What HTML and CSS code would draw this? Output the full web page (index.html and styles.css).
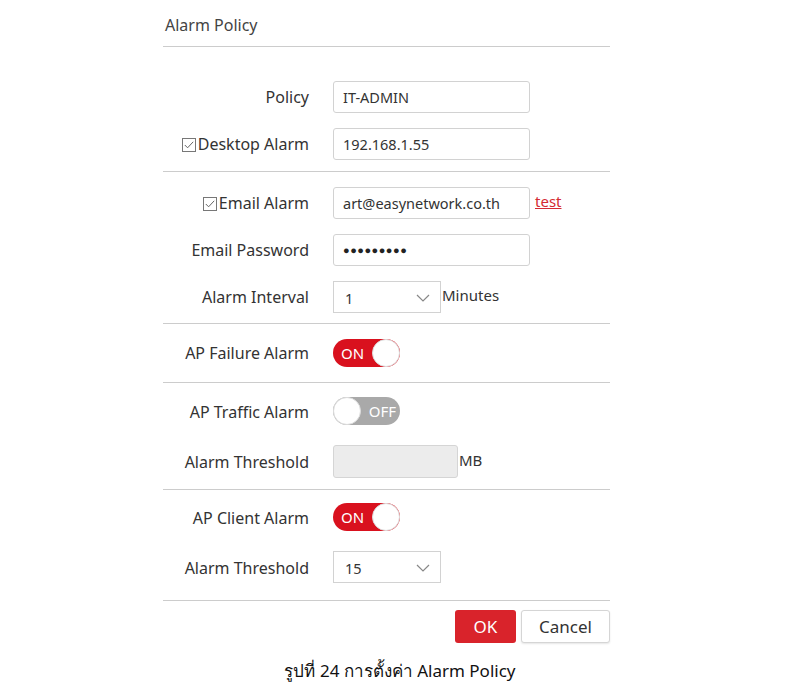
FILE: index.html
```html
<!DOCTYPE html>
<html lang="en">
<head>
    <meta charset="UTF-8">
    <title>Alarm Policy</title>
    <link rel="stylesheet" href="styles.css">
</head>
<body>
    <div class="panel">
        <div class="title">Alarm Policy</div>

        <div class="group g1">
            <div class="row">
                <label class="lbl">Policy</label>
                <div class="field"><input class="txt" type="text" value="IT-ADMIN"></div>
            </div>
            <div class="row">
                <label class="lbl"><span class="chk"><svg width="14" height="14" viewBox="0 0 14 14"><rect x="0.5" y="0.5" width="13" height="13" fill="#fff" stroke="#777"/><path d="M2.8 7 L5.6 9.8 L11.2 3.8" fill="none" stroke="#666" stroke-width="1"/></svg></span>Desktop Alarm</label>
                <div class="field"><input class="txt" type="text" value="192.168.1.55"></div>
            </div>
        </div>

        <div class="group g2">
            <div class="row">
                <label class="lbl"><span class="chk"><svg width="14" height="14" viewBox="0 0 14 14"><rect x="0.5" y="0.5" width="13" height="13" fill="#fff" stroke="#777"/><path d="M2.8 7 L5.6 9.8 L11.2 3.8" fill="none" stroke="#666" stroke-width="1"/></svg></span>Email Alarm</label>
                <div class="field"><input class="txt" type="text" value="art@easynetwork.co.th"><a class="test" href="#">test</a></div>
            </div>
            <div class="row">
                <label class="lbl">Email Password</label>
                <div class="field"><div class="txt dots">●●●●●●●●●</div></div>
            </div>
            <div class="row">
                <label class="lbl">Alarm Interval</label>
                <div class="field">
                    <div class="sel"><span>1</span><svg width="14" height="8" viewBox="0 0 14 8"><path d="M1 1 L7 7 L13 1" fill="none" stroke="#888" stroke-width="1.2"/></svg></div>
                    <span class="unit">Minutes</span>
                </div>
            </div>
        </div>

        <div class="group g3">
            <div class="row">
                <label class="lbl">AP Failure Alarm</label>
                <div class="field"><div class="toggle on"><span class="tt">ON</span><span class="knob"></span></div></div>
            </div>
        </div>

        <div class="group g4">
            <div class="row">
                <label class="lbl">AP Traffic Alarm</label>
                <div class="field"><div class="toggle off"><span class="knob"></span><span class="tt">OFF</span></div></div>
            </div>
            <div class="row">
                <label class="lbl">Alarm Threshold</label>
                <div class="field"><div class="txt short disabled"></div><span class="unit">MB</span></div>
            </div>
        </div>

        <div class="group g5">
            <div class="row">
                <label class="lbl">AP Client Alarm</label>
                <div class="field"><div class="toggle on"><span class="tt">ON</span><span class="knob"></span></div></div>
            </div>
            <div class="row">
                <label class="lbl">Alarm Threshold</label>
                <div class="field">
                    <div class="sel"><span>15</span><svg width="14" height="8" viewBox="0 0 14 8"><path d="M1 1 L7 7 L13 1" fill="none" stroke="#888" stroke-width="1.2"/></svg></div>
                </div>
            </div>
        </div>

        <div class="actions">
            <button class="btn ok">OK</button>
            <button class="btn cancel">Cancel</button>
        </div>
    </div>

    <p class="caption">รูปที่ 24 การตั้งค่า Alarm Policy</p>
</body>
</html>
```

FILE: styles.css
```css
body { margin: 0; background: #fff; font-family: "Noto Sans", "Open Sans", sans-serif; color: #333; }
.panel { width: 447px; margin-left: 163px; }
.title { height: 46px; line-height: 50px; padding-left: 2px; font-size: 16px; color: #444; border-bottom: 1px solid #ccc; }
.group { border-bottom: 1px solid #ccc; }
.g1 { padding: 26px 0 4px; }
.g2 { padding: 7px 0 3px; }
.g3 { padding: 5px 0 6px; }
.g4 { padding: 3px 0 3px; }
.g4 .row, .g5 .row { height: 50px; }
.g5 { padding: 2px 0 8px; }
.row { display: flex; align-items: center; height: 47px; }
.lbl { width: 146px; text-align: right; font-size: 16px; color: #333; display: flex; justify-content: flex-end; align-items: center; padding-top: 1px; }
.chk { display: inline-flex; margin-right: 2px; margin-top: 1px; }
.field { margin-left: 24px; display: flex; align-items: center; }
.txt { box-sizing: border-box; width: 197px; height: 32px; border: 1px solid #d2d2d2; border-radius: 3px; padding: 0 9px; font-family: inherit; font-size: 14.5px; color: #333; background: #fff; }
.dots { display: flex; align-items: center; font-size: 11px; letter-spacing: 0.5px; color: #222; }
.short { width: 125px; height: 33px; }
.disabled { background: #ececec; border-color: #d5d5d5; }
.test { margin-left: 5px; margin-top: -4px; color: #d42a32; font-size: 15px; }
.sel { box-sizing: border-box; width: 108px; height: 32px; border: 1px solid #d2d2d2; display: flex; align-items: center; justify-content: space-between; padding: 2px 10px 0 11px; font-size: 14.5px; }
.unit { font-size: 15px; margin-left: 1px; margin-top: -3px; }
.toggle { box-sizing: border-box; width: 67px; height: 28px; border-radius: 14px; display: flex; align-items: center; justify-content: space-between; }
.toggle .knob { width: 28px; height: 28px; border-radius: 50%; background: #fff; box-sizing: border-box; border: 1px solid #ddd; }
.toggle .tt { color: #fff; font-size: 15px; }
.on { background: #d9111e; padding-left: 8px; }
.off { background: #a9a9a9; padding-right: 4px; }
.actions { display: flex; justify-content: flex-end; gap: 5px; padding-top: 9px; }
.btn { height: 33px; border-radius: 3px; font-family: inherit; font-size: 17px; }
.ok { width: 61px; background: #d9232b; border: none; color: #fff; }
.cancel { width: 89px; background: #fff; border: 1px solid #d5d5d5; color: #333; box-shadow: 0 1px 2px rgba(0,0,0,0.1); }
.caption { text-align: center; margin: 14px 0 0; font-size: 17px; color: #111; }
```
